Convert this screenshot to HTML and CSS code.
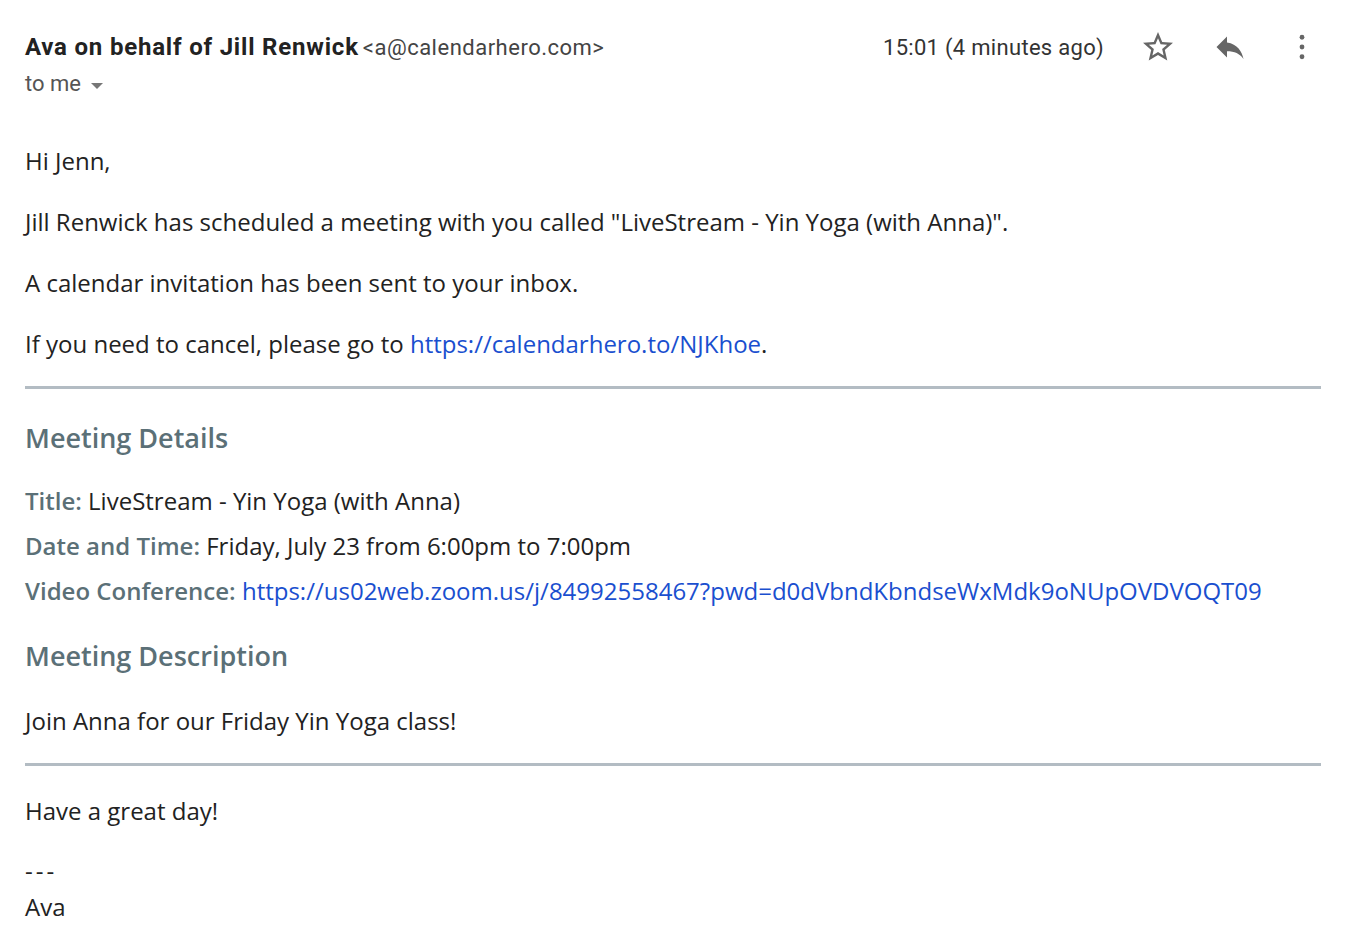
FILE: index.html
```html
<!DOCTYPE html>
<html>
<head>
<meta charset="utf-8">
<link rel="stylesheet" href="styles.css">
</head>
<body>
<div class="mail">
  <header class="head">
    <div class="sender">
      <div class="from"><span class="name">Ava on behalf of Jill Renwick</span> <span class="addr">&lt;a@calendarhero.com&gt;</span></div>
      <div class="to">to me <span class="caret"></span></div>
    </div>
    <div class="meta">
      <span class="time">15:01 (4 minutes ago)</span>
      <span class="icon star"><svg width="36" height="36" viewBox="0 0 24 24"><path fill="#666" d="M22 9.24l-7.19-.62L12 2 9.19 8.63 2 9.24l5.46 4.73L5.82 21 12 17.27 18.18 21l-1.63-7.030L22 9.24zM12 15.4l-3.76 2.27 1-4.28-3.32-2.88 4.38-.38L12 6.1l1.71 4.04 4.38.38-3.32 2.88 1 4.28L12 15.4z"/></svg></span>
      <span class="icon reply"><svg width="36" height="36" viewBox="0 0 24 24"><path fill="#666" d="M10 9V5l-7 7 7 7v-4.1c5 0 8.5 1.6 11 5.1-1-5-4-10-11-11z"/></svg></span>
      <span class="icon more"><svg width="36" height="36" viewBox="0 0 24 24"><circle cx="12" cy="5.5" r="1.6" fill="#666"/><circle cx="12" cy="12" r="1.6" fill="#666"/><circle cx="12" cy="18.5" r="1.6" fill="#666"/></svg></span>
    </div>
  </header>

  <div class="body">
    <p>Hi Jenn,</p>
    <p>Jill Renwick has scheduled a meeting with you called "LiveStream - Yin Yoga (with Anna)".</p>
    <p>A calendar invitation has been sent to your inbox.</p>
    <p>If you need to cancel, please go to <a href="#">https://calendarhero.to/NJKhoe</a>.</p>
    <hr class="rule">
    <h2 class="h-details">Meeting Details</h2>
    <p class="row"><b>Title:</b> LiveStream - Yin Yoga (with Anna)</p>
    <p class="row"><b>Date and Time:</b> Friday, July 23 from 6:00pm to 7:00pm</p>
    <p class="row"><b>Video Conference:</b> <a href="#">https://us02web.zoom.us/j/84992558467?pwd=d0dVbndKbndseWxMdk9oNUpOVDVOQT09</a></p>
    <h2 class="h-desc">Meeting Description</h2>
    <p>Join Anna for our Friday Yin Yoga class!</p>
    <hr class="rule">
    <p class="bye">Have a great day!</p>
    <p class="sig"><span class="dashes">---</span><br>Ava</p>
  </div>
</div>
</body>
</html>
```

FILE: styles.css
```css
html, body {
  margin: 0;
  padding: 0;
  background: #fff;
}
.mail {
  width: 1296px;
  padding: 28px 0 0 25px;
}
.head {
  display: flex;
  justify-content: space-between;
  align-items: flex-start;
  font-family: Roboto, "Liberation Sans", sans-serif;
}
.from {
  line-height: 38px;
  white-space: nowrap;
}
.name {
  font-weight: 700;
  font-size: 24px;
  letter-spacing: 0.8px;
  color: #222;
}
.addr {
  font-size: 22px;
  letter-spacing: 0.5px;
  color: #444;
}
.to {
  margin-top: 4px;
  font-size: 22px;
  color: #555;
  line-height: 22px;
  display: flex;
  align-items: center;
  gap: 10px;
}
.caret {
  width: 0;
  height: 0;
  border-left: 6px solid transparent;
  border-right: 6px solid transparent;
  border-top: 6px solid #777;
  margin-top: 3px;
}
.meta {
  display: flex;
  align-items: center;
  height: 38px;
  margin-right: 1px;
}
.time {
  font-size: 22px;
  letter-spacing: 0.3px;
  color: #333;
  margin-right: 36px;
}
.icon {
  display: flex;
  width: 36px;
  height: 36px;
  margin-left: 36px;
}
.icon.star {
  margin-left: 0;
}
.body {
  font-family: "Open Sans", "Noto Sans", sans-serif;
  font-size: 24px;
  color: #222;
  padding-top: 50px;
}
.body p {
  margin: 0 0 29px;
  line-height: 32px;
}
.body a {
  color: #1a4fcf;
  text-decoration: none;
}
.rule {
  border: 0;
  height: 3px;
  background: #b3bcc3;
  margin: -3px 0 29px;
}
h2 {
  font-family: "Open Sans", "Noto Sans", sans-serif;
  font-weight: 600;
  font-size: 27px;
  color: #5b7077;
  line-height: 40px;
  margin: 0;
}
.h-details {
  margin: 0 0 27px;
}
.body p.row {
  margin: 0 0 13px;
}
.body b {
  font-weight: 600;
  color: #5b7077;
}
.h-desc {
  margin: 29px 0 29px;
}
.body p.bye {
  margin-bottom: 26px;
}
.body p.sig {
  line-height: 36px;
}
.dashes {
  letter-spacing: 3px;
}
```
